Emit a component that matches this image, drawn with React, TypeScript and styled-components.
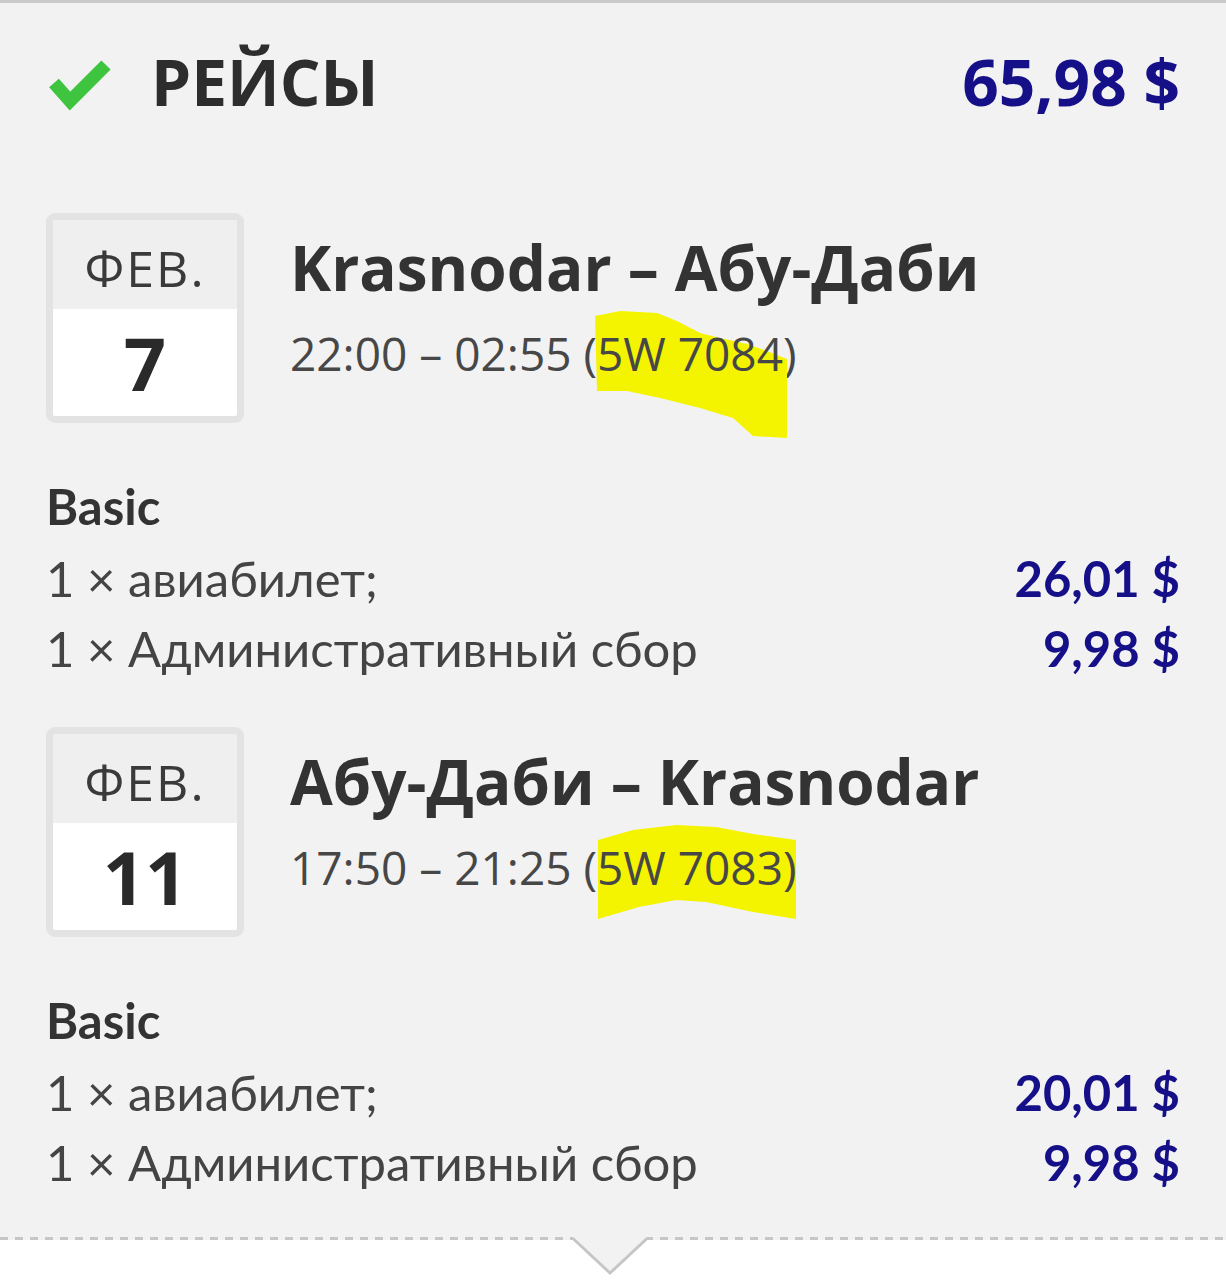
import { FC } from "react";
import styled, { createGlobalStyle } from "styled-components";

type Flight = {
    month: string;
    day: string;
    route: string;
    times: string;
    code: string;
    mark: { left: number; top: number; width: number; height: number; points: string };
    fare: string;
    items: { label: string; price: string }[];
};

const flights: Flight[] = [
    {
        month: "ФЕВ.",
        day: "7",
        route: "Krasnodar – Абу-Даби",
        times: "22:00 – 02:55",
        code: "5W 7084",
        mark: {
            left: -2,
            top: -11,
            width: 192,
            height: 127,
            points: "0,5 25,0 62,2 82,10 105,22 125,27 152,33 172,40 192,48 192,127 158,125 138,107 105,97 65,87 32,80 2,80",
        },
        fare: "Basic",
        items: [
            { label: "1 × авиабилет;", price: "26,01 $" },
            { label: "1 × Административный сбор", price: "9,98 $" },
        ],
    },
    {
        month: "ФЕВ.",
        day: "11",
        route: "Абу-Даби – Krasnodar",
        times: "17:50 – 21:25",
        code: "5W 7083)",
        mark: {
            left: -1,
            top: -11,
            width: 200,
            height: 95,
            points: "2,15 37,5 80,0 120,2 157,9 200,15 200,94 157,87 110,77 80,75 43,82 2,94",
        },
        fare: "Basic",
        items: [
            { label: "1 × авиабилет;", price: "20,01 $" },
            { label: "1 × Административный сбор", price: "9,98 $" },
        ],
    },
];

const GlobalStyle = createGlobalStyle`
    html, body {
        margin: 0;
        background: #ffffff;
    }

    #root {
        min-height: 1280px;
    }
`;

const CheckIcon: FC = () => (
    <svg width="66" height="58" viewBox="0 0 66 58">
        <polyline
            points="8,30 24,48 60,12"
            fill="none"
            stroke="#3fc43f"
            strokeWidth="13"
            strokeLinejoin="miter"
        />
    </svg>
);

const FlightBlock: FC<{ flight: Flight }> = ({ flight }) => {
    const { mark } = flight;
    const closing = flight.code.endsWith(")");
    const code = closing ? flight.code.slice(0, -1) : flight.code;

    return <Section>
        <FlightRow>
            <DateBox>
                <Month>{flight.month}</Month>
                <Day>{flight.day}</Day>
            </DateBox>
            <FlightInfo>
                <Route>{flight.route}</Route>
                <Times>
                    {flight.times} (
                    <Marked>
                        <MarkerStroke
                            style={{ left: mark.left, top: mark.top }}
                            width={mark.width}
                            height={mark.height}
                            viewBox={`0 0 ${mark.width} ${mark.height}`}
                        >
                            <polygon points={mark.points} fill="#f4f400" />
                        </MarkerStroke>
                        {code}{closing ? ")" : ""}
                    </Marked>
                    {closing ? "" : ")"}
                </Times>
            </FlightInfo>
        </FlightRow>
        <Fare>
            <FareName>{flight.fare}</FareName>
            {flight.items.map((item, i) => (
                <FareLine key={i}>
                    <span>{item.label}</span>
                    <Price>{item.price}</Price>
                </FareLine>
            ))}
        </Fare>
    </Section>;
};

const App: FC = () => {
    return <>
        <GlobalStyle />
        <Panel>
            <Header>
                <CheckIcon />
                <Title>РЕЙСЫ</Title>
                <Total>65,98 $</Total>
            </Header>
            {flights.map((f, i) => <FlightBlock key={i} flight={f} />)}
            <Footer>
                <Notch width="74" height="40" viewBox="0 0 74 40">
                    <polygon points="0,0 74,0 37,36" fill="#f2f2f2" />
                    <polyline points="0,1.5 37,36 74,1.5" fill="none" stroke="#c6c6c6" strokeWidth="3" />
                </Notch>
            </Footer>
        </Panel>
    </>;
};

export default App;


const Panel = styled.div`
    width: 1226px;
    box-sizing: border-box;
    background: #f2f2f2;
    border-top: 3px solid #c9c9c9;
    padding: 39px 46px 0;
    position: relative;
`;

const Header = styled.div`
    display: flex;
    flex-flow: row nowrap;
    align-items: center;
    height: 80px;
    gap: 39px;
`;

const Title = styled.div`
    font-family: "Open Sans", sans-serif;
    font-weight: 700;
    font-size: 64px;
    line-height: 80px;
    color: #2d2d2d;
`;

const Total = styled.div`
    margin-left: auto;
    font-family: "Open Sans", sans-serif;
    font-weight: 700;
    font-size: 64px;
    line-height: 80px;
    color: #150f88;
`;

const Section = styled.div`
    padding-top: 91px;

    & + & {
        padding-top: 44px;
    }
`;

const FlightRow = styled.div`
    display: flex;
    flex-flow: row nowrap;
    align-items: flex-start;
    gap: 46px;
`;

const DateBox = styled.div`
    width: 198px;
    height: 210px;
    box-sizing: border-box;
    border: 7px solid #e3e3e3;
    border-radius: 9px;
    overflow: hidden;
    display: flex;
    flex-flow: column nowrap;
    flex-shrink: 0;
    font-family: "Open Sans", sans-serif;
`;

const Month = styled.div`
    height: 89px;
    box-sizing: border-box;
    padding-top: 6px;
    background: #efefef;
    display: flex;
    align-items: center;
    justify-content: center;
    font-size: 50px;
    letter-spacing: 2px;
    color: #3a3a3a;
`;

const Day = styled.div`
    flex: 1;
    background: #ffffff;
    display: flex;
    align-items: center;
    justify-content: center;
    font-size: 74px;
    font-weight: 700;
    color: #2a2a2a;
`;

const FlightInfo = styled.div`
    padding-top: 17px;
    font-family: "Open Sans", sans-serif;
`;

const Route = styled.div`
    font-size: 62px;
    font-weight: 700;
    line-height: 74px;
    color: #333333;
    white-space: nowrap;
`;

const Times = styled.div`
    margin-top: 19px;
    font-size: 46px;
    line-height: 60px;
    color: #474747;
    white-space: nowrap;
`;

const Marked = styled.span`
    position: relative;
    isolation: isolate;
`;

const MarkerStroke = styled.svg`
    position: absolute;
    z-index: -1;
`;

const Fare = styled.div`
    margin-top: 46px;
    font-family: "Lato", sans-serif;
    font-size: 49px;
    color: #444444;
`;

const FareName = styled.div`
    font-weight: 700;
    line-height: 74px;
    color: #333333;
`;

const FareLine = styled.div`
    display: flex;
    flex-flow: row nowrap;
    justify-content: space-between;
    line-height: 70px;
`;

const Price = styled.span`
    font-weight: 700;
    color: #150f88;
`;

const Footer = styled.div`
    margin: 40px -46px 0;
    height: 3px;
    background: repeating-linear-gradient(to right, #c6c6c6 0 8px, transparent 8px 15px);
    position: relative;
`;

const Notch = styled.svg`
    position: absolute;
    left: 573px;
    top: 0;
`;
